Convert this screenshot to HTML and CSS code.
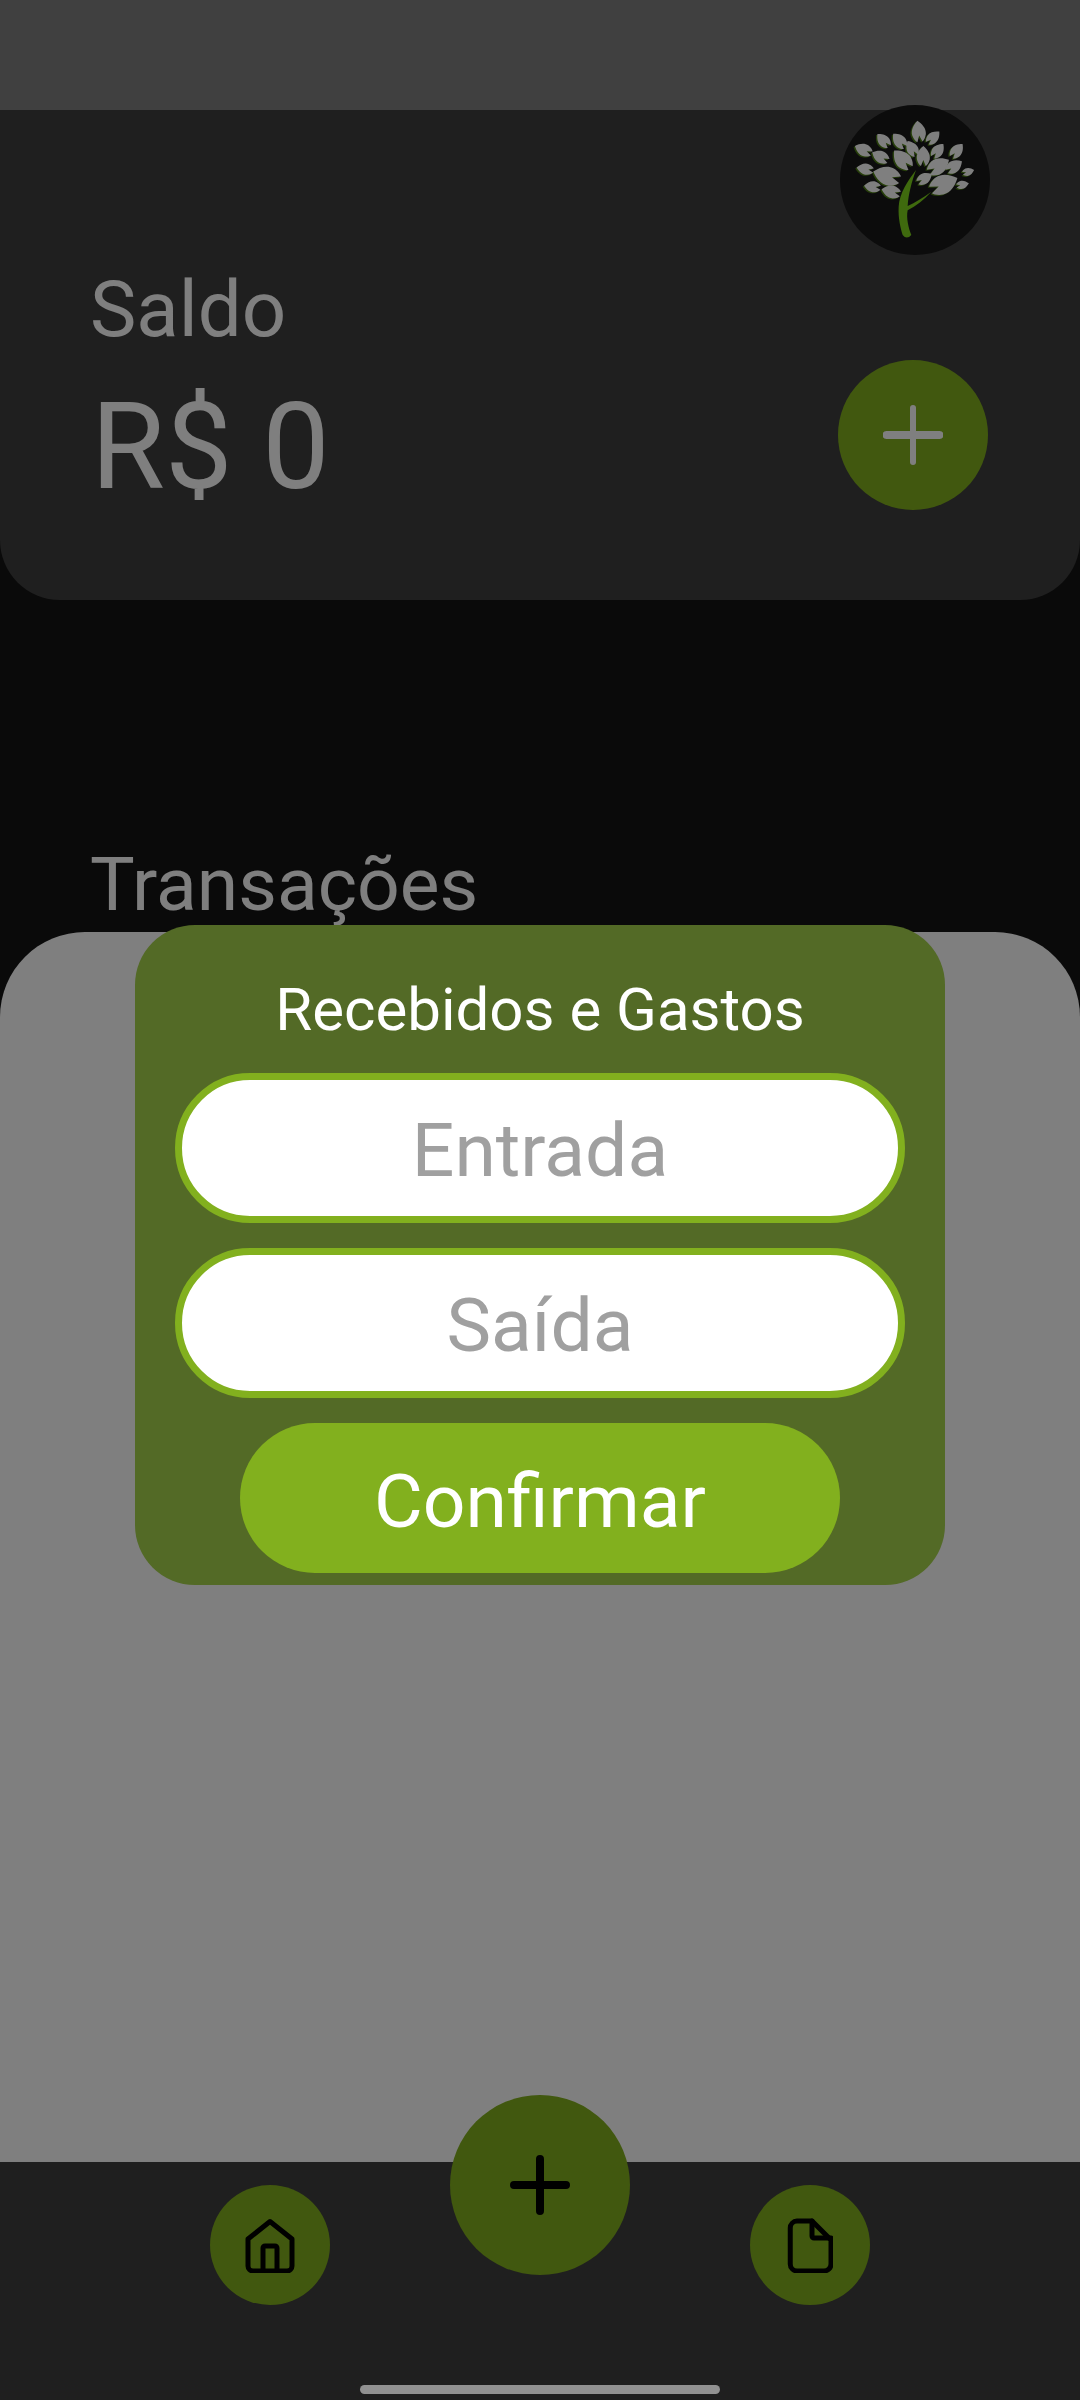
FILE: index.html
```html
<!DOCTYPE html>
<html lang="pt-BR">
<head>
<meta charset="utf-8">
<title>Saldo</title>
<link rel="stylesheet" href="styles.css">
</head>
<body>
<div class="app">
  <div class="status-bar"></div>
  <header class="summary">
    <div class="logo">
      <svg viewBox="0 15 450 450" width="150" height="150" aria-hidden="true">
        <defs>
          <path id="leaf" d="M0,-.5 C.2,-.33 .37,-.1 .32,.17 C.27,.36 .18,.46 .12,.5 L0,.2 L-.12,.5 C-.18,.46 -.27,.36 -.32,.17 C-.37,-.1 -.2,-.33 0,-.5Z"/>
          <g id="crown">
            <use href="#leaf" transform="translate(236 94) rotate(-7) scale(64)"/>
            <use href="#leaf" transform="translate(280 112) rotate(46) scale(50)"/>
            <use href="#leaf" transform="translate(130 121) rotate(-43) scale(52)"/>
            <use href="#leaf" transform="translate(178 122) rotate(-42) scale(55)"/>
            <use href="#leaf" transform="translate(216 145) rotate(-31) scale(52)"/>
            <use href="#leaf" transform="translate(250 168) rotate(0) scale(60)"/>
            <use href="#leaf" transform="translate(294 152) rotate(39) scale(51)"/>
            <use href="#leaf" transform="translate(351 152) rotate(40) scale(52)"/>
            <use href="#leaf" transform="translate(70 149) rotate(-66) scale(55)"/>
            <use href="#leaf" transform="translate(121 170) rotate(-62) scale(55)"/>
            <use href="#leaf" transform="translate(187 178) rotate(-43) scale(72)"/>
            <use href="#leaf" transform="translate(296 198) rotate(59) scale(72)"/>
            <use href="#leaf" transform="translate(343 199) rotate(56) scale(55)"/>
            <use href="#leaf" transform="translate(385 215) rotate(74) scale(36)"/>
            <use href="#leaf" transform="translate(75 207) rotate(-80) scale(51)"/>
            <use href="#leaf" transform="translate(140 227) rotate(-73) scale(84)"/>
            <use href="#leaf" transform="translate(254 235) rotate(59) scale(50)"/>
            <use href="#leaf" transform="translate(312 252) rotate(66) scale(88)"/>
            <use href="#leaf" transform="translate(368 254) rotate(78) scale(38)"/>
            <use href="#leaf" transform="translate(97 260) rotate(-83) scale(50)"/>
            <use href="#leaf" transform="translate(153 275) rotate(-76) scale(58)"/>
          </g>
        </defs>
        <use href="#crown" class="leaf-shade" transform="translate(-4 3)"/>
        <use href="#crown" class="leaf-face"/>
        <path class="trunk" d="M228,210 C205,240 178,280 176,320 C174,355 182,385 188,405 Q200,420 214,405 C206,385 198,355 203,331 C228,318 252,300 274,275 C250,292 225,308 203,318 C205,285 215,245 228,210Z"/>
      </svg>
    </div>
    <div class="balance-row">
      <div class="balance">
        <div class="balance-label">Saldo</div>
        <div class="balance-value">R$ 0</div>
      </div>
      <div class="add-btn">
        <svg viewBox="0 0 60 60" width="60" height="60" aria-hidden="true">
          <path class="add-h" d="M3.500 30H56.500"/>
          <path class="add-v" d="M30 3V57"/>
        </svg>
      </div>
    </div>
  </header>
  <section class="transactions">
    <h2 class="transactions-title">Transações</h2>
  </section>
  <section class="sheet"></section>
  <nav class="nav">
    <div class="nav-row">
      <div class="nav-btn">
        <svg viewBox="0 0 50 56" width="50" height="56" aria-hidden="true">
          <path class="icon-line" d="M25 4.500L3 22V49A5 5 0 0 0 8 54H42A5 5 0 0 0 47 49V22Z"/>
          <path class="icon-line" d="M18 54V31A2 2 0 0 1 20 29H30A2 2 0 0 1 32 31V54"/>
        </svg>
      </div>
      <div class="nav-fab">
        <svg viewBox="0 0 60 60" width="60" height="60" aria-hidden="true">
          <path class="fab-plus" d="M4 30H56M30 4V56"/>
        </svg>
      </div>
      <div class="nav-btn">
        <svg viewBox="0 0 46 56" width="46" height="56" aria-hidden="true">
          <path class="icon-line" d="M10 4H25L44 23V47A7 7 0 0 1 37 54H10A7 7 0 0 1 3.250 47V11A7 7 0 0 1 10 4Z"/>
          <path class="icon-line" d="M25 4V19A2 2 0 0 0 27 21H44"/>
        </svg>
      </div>
    </div>
    <div class="home-indicator"></div>
  </nav>
  <div class="scrim">
    <div class="modal">
      <div class="modal-title">Recebidos e Gastos</div>
      <div class="field">Entrada</div>
      <div class="field">Saída</div>
      <div class="confirm">Confirmar</div>
    </div>
  </div>
</div>
</body>
</html>
```

FILE: styles.css
```css
* { box-sizing: border-box; }

html, body {
  margin: 0;
  padding: 0;
}

body {
  width: 1080px;
  height: 2400px;
  overflow: hidden;
  background: #141414;
  font-family: Roboto, "Liberation Sans", sans-serif;
}

.app {
  position: relative;
  display: flex;
  flex-direction: column;
  width: 1080px;
  height: 2400px;
  background: #141414;
}

.status-bar {
  height: 110px;
  background: #808080;
}

.summary {
  height: 490px;
  padding: 0 92px 0 90px;
  background: #3e3e3e;
  border-radius: 0 0 60px 60px;
}

.logo {
  width: 150px;
  height: 150px;
  margin: -5px -2px 0 auto;
  border-radius: 50%;
  background: #181818;
}

.logo svg { display: block; }
.leaf-shade { fill: #4c7d14; }
.leaf-face { fill: #ffffff; }
.trunk { fill: #7ed41c; }

.balance-row {
  display: flex;
  justify-content: space-between;
  align-items: flex-start;
  margin-top: 13px;
}

.balance { color: #fff; }

.balance-label {
  font-size: 78px;
  line-height: 84px;
}

.balance-value {
  margin-top: 25px;
  margin-left: 1px;
  font-size: 120px;
  line-height: 140px;
}

.add-btn {
  display: flex;
  align-items: center;
  justify-content: center;
  width: 150px;
  height: 150px;
  margin-top: 92px;
  background: #82b01e;
  border-radius: 50%;
}

.add-btn svg { display: block; }
.add-h { stroke: #fff; stroke-width: 8; stroke-linecap: round; fill: none; }
.add-v { stroke: #fff; stroke-width: 6; stroke-linecap: round; fill: none; }

.transactions {
  height: 332px;
  padding: 240px 0 0 90px;
}

.transactions-title {
  margin: 0;
  color: #fff;
  font-size: 75px;
  font-weight: 400;
  line-height: 88px;
}

.sheet {
  height: 1230px;
  background: #fff;
  border-radius: 85px 85px 0 0;
}

.nav {
  flex: 1;
  padding-top: 23px;
  background: #3e3e3e;
}

.nav-row {
  display: flex;
  align-items: flex-start;
  justify-content: center;
  gap: 120px;
}

.nav-btn,
.nav-fab {
  display: flex;
  align-items: center;
  justify-content: center;
  background: #82b01e;
  border-radius: 50%;
}

.nav-btn {
  width: 120px;
  height: 120px;
}

.nav-fab {
  width: 180px;
  height: 180px;
  margin-top: -90px;
}

.nav-btn svg,
.nav-fab svg { display: block; }

.icon-line {
  fill: none;
  stroke: #000;
  stroke-width: 5;
  stroke-linejoin: round;
  stroke-linecap: round;
}

.fab-plus {
  fill: none;
  stroke: #000;
  stroke-width: 8;
  stroke-linecap: round;
}

.home-indicator {
  position: relative;
  z-index: 2;
  width: 360px;
  height: 9px;
  margin: 80px auto 0;
  background: #919191;
  border-radius: 5px;
}

.scrim {
  position: absolute;
  inset: 0;
  z-index: 1;
  display: flex;
  justify-content: center;
  padding-top: 925px;
  background: rgba(0, 0, 0, 0.5);
}

.modal {
  display: flex;
  flex-direction: column;
  align-items: center;
  width: 810px;
  height: 660px;
  padding-top: 50px;
  background: #536a26;
  border-radius: 60px;
}

.modal-title {
  height: 98px;
  color: #fff;
  font-size: 60px;
  line-height: 70px;
}

.field {
  width: 730px;
  height: 150px;
  margin-bottom: 25px;
  border: 7px solid #82b01e;
  border-radius: 75px;
  background: #fff;
  color: #a0a0a0;
  font-size: 75px;
  line-height: 140px;
  text-align: center;
}

.confirm {
  width: 600px;
  height: 150px;
  background: #82b01e;
  border-radius: 75px;
  color: #fff;
  font-size: 75px;
  line-height: 156px;
  text-align: center;
}
```
